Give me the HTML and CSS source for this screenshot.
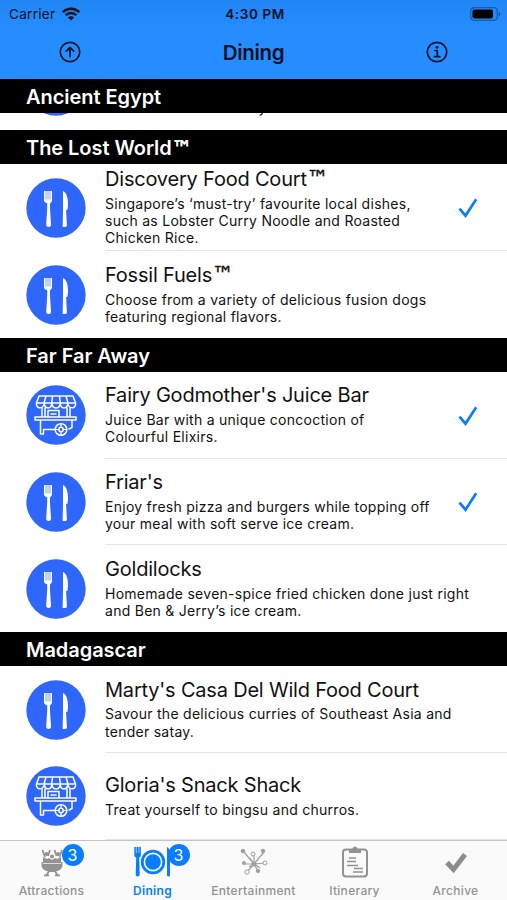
FILE: index.html
```
<!DOCTYPE html>
<html lang="en">

<head>
    <meta charset="utf-8">
    <title>Dining</title>
    <link rel="stylesheet" href="styles.css">
</head>

<body>
    <svg class="sprite" width="0" height="0">
        <symbol id="cutlery" viewBox="0 0 60 60">
            <circle cx="30" cy="30" r="29.7" fill="#2f67fd"/>
            <g fill="#fff">
                <path d="M18 13h8v9c0 1.800-.8 2.700-2 3.300v5.500l1 15.500c.1 1.700-.6 2.800-2.400 2.800s-2.500-1.100-2.400-2.800l1-15.500v-5.500c-2.400-.6-3.200-1.600-3.200-3.300z"/>
                <path d="M37 13c3.500 1.500 5 6.500 5 13 0 2.300-.2 4.200-.7 6h-1.200l.8 15.300c.1 1-.6 1.700-1.700 1.700h-2.600l.4-17z"/>
            </g>
            <path d="M20 13v8.500M22 13v8.500M24 13v8.500" stroke="#2f67fd" stroke-width=".6"/>
        </symbol>
        <symbol id="cart" viewBox="0 0 60 60">
            <circle cx="30" cy="30" r="29.7" fill="#2f67fd"/>
            <g fill="none" stroke="#fff" stroke-width="1.5" stroke-linecap="round" stroke-linejoin="round">
                <path d="M13 11h34l2.500 7h-39zM20 11l-2 7M26.500 11l-.8 7M33.500 11l.8 7M40 11l2 7"/>
                <path d="M10.500 18c-1 6.300 7 6.500 7.900 0 0 6.500 7.200 6.500 7.500 0 .2 6.500 8.200 6.500 8.300 0 .3 6.500 7.500 6.500 7.500 0 .8 6.500 8.800 6.300 7.800 0"/>
                <path d="M16 23v9M19 23v9M41 23v9M44 23v9M22 32v-6.500h11V32M25 29h5M9 32h41v3H9zM14.500 35v14h3v-4.500H29M46 35v7.500l-3 1.500"/>
                <circle cx="35" cy="44.500" r="5.800"/>
                <circle cx="35" cy="44.500" r="2.200"/>
                <path d="M35 38.700v3.600M35 46.700v3.600M29.200 44.500h3.600M37.200 44.500h3.600" stroke-width="1.2"/>
            </g>
        </symbol>
        <symbol id="check" viewBox="0 0 20 20">
            <path d="M1.500 10.700l6 7L18.200 1.300" fill="none" stroke="#087dfd" stroke-width="2.700"/>
        </symbol>
    </svg>

    <div class="header">
        <div class="status">
            <div class="carrier">
                <span>Carrier</span>
                <svg width="20" height="14" viewBox="0 0 20 14" fill="none" stroke="#04101f" stroke-width="2.5">
                    <path d="M1.700 5.100c4.700-4.600 11.900-4.600 16.600 0M4.700 8.100c3-2.900 7.600-2.900 10.600 0"/>
                    <path d="M10 13.500L6.900 10.400c1.700-1.600 4.500-1.600 6.200 0z" fill="#04101f" stroke="none"/>
                </svg>
            </div>
            <div class="clock">4:30 PM</div>
            <div class="battery">
                <svg width="31" height="14" viewBox="0 0 31 14">
                    <rect x=".7" y=".7" width="26.600" height="12.600" rx="3.500" fill="none" stroke="#155ba6" stroke-width="1.200"/>
                    <rect x="2.500" y="2.500" width="20.500" height="9" rx="2" fill="#000"/>
                    <path d="M28.700 4.700c2 .8 2 3.800 0 4.600z" fill="#155ba6"/>
                </svg>
            </div>
        </div>
        <div class="navbar">
            <svg width="22" height="22" viewBox="0 0 22 22" fill="none" stroke="#04142b" stroke-width="1.7" stroke-linecap="round" stroke-linejoin="round">
                <circle cx="11" cy="11" r="9.7"/>
                <path d="M11 15.700V6.700M7.200 10.200L11 6.400l3.800 3.800"/>
            </svg>
            <h1>Dining</h1>
            <svg width="22" height="22" viewBox="0 0 22 22" fill="none" stroke="#04142b" stroke-width="1.7" stroke-linecap="round" stroke-linejoin="round">
                <circle cx="11" cy="11" r="9.7"/>
                <path d="M9 9.500h2.300v6M8.500 15.700h5.300"/>
                <circle cx="11" cy="6.300" r="1.4" fill="#04142b" stroke="none"/>
            </svg>
        </div>
    </div>

    <div class="list">
        <h2>Ancient Egypt</h2>
        <div class="peek">
            <svg class="peek-icon" viewBox="0 57 60 3"><use href="#cutlery" width="60" height="60"/></svg>
            <svg class="peek-tail" viewBox="0 0 6 3"><path d="M4.500 0c-.6 1.800-1.400 2.300-3 2.200" fill="none" stroke="#111" stroke-width="1.2"/></svg>
        </div>

        <h2>The Lost World<span class="tm">™</span></h2>
        <div class="row">
            <svg class="icon"><use href="#cutlery"/></svg>
            <div class="info">
                <div class="text">
                    <h3>Discovery Food Court<span class="tm">™</span></h3>
                    <p>Singapore’s ‘must-try’ favourite local dishes,<br>such as Lobster Curry Noodle and Roasted<br>Chicken Rice.</p>
                </div>
                <svg class="check"><use href="#check"/></svg>
            </div>
        </div>
        <div class="row">
            <svg class="icon"><use href="#cutlery"/></svg>
            <div class="info">
                <div class="text">
                    <h3>Fossil Fuels<span class="tm">™</span></h3>
                    <p>Choose from a variety of delicious fusion dogs<br>featuring regional flavors.</p>
                </div>
            </div>
        </div>

        <h2>Far Far Away</h2>
        <div class="row">
            <svg class="icon"><use href="#cart"/></svg>
            <div class="info">
                <div class="text">
                    <h3>Fairy Godmother's Juice Bar</h3>
                    <p>Juice Bar with a unique concoction of<br>Colourful Elixirs.</p>
                </div>
                <svg class="check"><use href="#check"/></svg>
            </div>
        </div>
        <div class="row">
            <svg class="icon"><use href="#cutlery"/></svg>
            <div class="info">
                <div class="text">
                    <h3>Friar's</h3>
                    <p>Enjoy fresh pizza and burgers while topping off<br>your meal with soft serve ice cream.</p>
                </div>
                <svg class="check"><use href="#check"/></svg>
            </div>
        </div>
        <div class="row">
            <svg class="icon"><use href="#cutlery"/></svg>
            <div class="info">
                <div class="text">
                    <h3>Goldilocks</h3>
                    <p>Homemade seven-spice fried chicken done just right<br>and Ben &amp; Jerry’s ice cream.</p>
                </div>
            </div>
        </div>

        <h2>Madagascar</h2>
        <div class="row">
            <svg class="icon"><use href="#cutlery"/></svg>
            <div class="info">
                <div class="text">
                    <h3>Marty's Casa Del Wild Food Court</h3>
                    <p>Savour the delicious curries of Southeast Asia and<br>tender satay.</p>
                </div>
            </div>
        </div>
        <div class="row">
            <svg class="icon"><use href="#cart"/></svg>
            <div class="info">
                <div class="text">
                    <h3>Gloria's Snack Shack</h3>
                    <p>Treat yourself to bingsu and churros.</p>
                </div>
            </div>
        </div>
    </div>

    <div class="tabbar">
        <div class="tab">
            <div class="tab-icon">
                <svg width="24" height="30" viewBox="0 0 24 30" fill="#929292">
                    <path d="M1.500 15h21v3c0 3.500-3 6-6 6h-9c-3 0-6-2.500-6-6z"/>
                    <path d="M3 10l4 2 2-1 3 2 3-2 2 1 4-2v6H3z"/>
                    <circle cx="6.500" cy="7" r="2"/>
                    <circle cx="12" cy="9.500" r="2"/>
                    <circle cx="18" cy="7" r="2"/>
                    <path d="M2.500 3l2.500 7M10 3L8 9M14.500 3l2 6M22 3l-2.500 7M6 29l3-5h6l3 5M4 28.300h5M15 28.300h5" fill="none" stroke="#929292" stroke-width="1.8"/>
                    <path d="M3 16.500h18" stroke="#ddd" stroke-width="1"/>
                </svg>
                <span class="badge">3</span>
            </div>
            <span>Attractions</span>
        </div>
        <div class="tab active">
            <div class="tab-icon">
                <svg width="38" height="30" viewBox="0 0 38 30" fill="#087dfd">
                    <path d="M.3 0h6.600v8c0 1.500-.8 2.200-1.700 2.600l.5 17c0 2.500-4 2.500-4 0l.5-17C1 10 .3 9.500.3 8z"/>
                    <path d="M2.300 0v6M4.900 0v6" stroke="#fafafa" stroke-width=".6"/>
                    <circle cx="19" cy="15" r="10.800" fill="none" stroke="#087dfd" stroke-width="2.800"/>
                    <circle cx="19" cy="15" r="7.800"/>
                    <path d="M33 0c3 1.500 4 6 4 10 0 2.500-.4 4.500-1 6v12c0 2-3 2-3 0z"/>
                </svg>
                <span class="badge">3</span>
            </div>
            <span>Dining</span>
        </div>
        <div class="tab">
            <div class="tab-icon">
                <svg width="28" height="30" viewBox="0 0 28 30" fill="#a0a0a0" stroke="#a0a0a0">
                    <path d="M14 17L4 5M14 17L24 5M14 17V8M14 17L5 17M14 17l11-1M14 17l-7 8M14 17l4 7M10 11l4 6 5-6M9 20l5-3 6 4" fill="none" stroke-width="1.2"/>
                    <circle cx="3" cy="4" r="1.8"/>
                    <circle cx="23" cy="4" r="1.8"/>
                    <circle cx="4" cy="16" r="1.5"/>
                    <circle cx="18" cy="24" r="1.7"/>
                    <circle cx="13" cy="7" r="2" fill="#fafafa"/>
                    <circle cx="25" cy="16" r="2" fill="#fafafa"/>
                    <circle cx="7" cy="25" r="2.2" fill="#fafafa"/>
                    <circle cx="14" cy="17" r="2.5" stroke="none"/>
                </svg>
            </div>
            <span>Entertainment</span>
        </div>
        <div class="tab">
            <div class="tab-icon">
                <svg width="28" height="32" viewBox="0 0 28 32" fill="none" stroke="#929292" stroke-width="2">
                    <rect x="2" y="3.500" width="24" height="27" rx="3"/>
                    <path d="M8 7V3.500h3.500c0-4 5-4 5 0H20V7z" fill="#929292" stroke="none"/>
                    <path d="M8 12h7M6 15.500h9M6 19.500h11M13 22.500h9M12 26h10" stroke-width="1.6"/>
                </svg>
            </div>
            <span>Itinerary</span>
        </div>
        <div class="tab">
            <div class="tab-icon">
                <svg width="22" height="30" viewBox="0 0 22 30">
                    <path d="M2 15.500l6.500 7L20 7.500" fill="none" stroke="#8c8c8c" stroke-width="5"/>
                </svg>
            </div>
            <span>Archive</span>
        </div>
    </div>
</body>

</html>
```
FILE: styles.css
```
body {
    font-family: Inter, "Liberation Sans", sans-serif;
    margin: 0;
    width: 507px;
    height: 900px;
    overflow: hidden;
    background-color: white;
    color: #111;
    display: flex;
    flex-direction: column;
}

h1, h2, h3, p {
    margin: 0;
}

.sprite {
    position: absolute;
}

.header {
    height: 79px;
    flex: none;
    background: linear-gradient(#2186f5, #258dff 40%);
    color: #04101f;
}

.status {
    height: 27px;
    display: grid;
    grid-template-columns: 1fr auto 1fr;
    align-items: center;
    padding: 0 6px 0 9px;
}

.carrier {
    display: flex;
    align-items: center;
    gap: 6px;
    font-size: 13.5px;
    letter-spacing: 0.3px;
}

.clock {
    font-size: 13.5px;
    font-weight: 600;
    letter-spacing: 0.6px;
}

.battery {
    display: flex;
    justify-content: flex-end;
}

.navbar {
    height: 50px;
    display: flex;
    align-items: center;
    justify-content: space-between;
    padding: 0 59px;
}

.navbar h1 {
    font-size: 20.5px;
    font-weight: 600;
    letter-spacing: -0.3px;
    color: #04101f;
}

.list {
    flex: 1;
    min-height: 0;
    overflow: hidden;
}

.list h2 {
    height: 34.2px;
    line-height: 37px;
    padding-left: 26px;
    background-color: black;
    color: white;
    font-size: 20px;
    font-weight: 600;
    letter-spacing: -0.05px;
}

.tm {
    font-family: "DejaVu Sans", sans-serif;
    font-size: 22px;
    line-height: 1;
    -webkit-text-stroke: 0.4px currentColor;
}

h2 .tm {
    font-size: 20px;
    font-weight: 400;
    -webkit-text-stroke-width: 0.7px;
}

.peek {
    height: 17px;
    display: flex;
    padding-left: 26px;
}

.peek-icon {
    width: 60px;
    height: 3px;
}

.peek-tail {
    width: 6px;
    height: 3px;
    margin-left: 172px;
}

.row {
    height: 86.7px;
    display: flex;
    padding-left: 26px;
}

.icon {
    width: 60px;
    height: 60px;
    flex: none;
    margin: 13.5px 19px 0 0;
}

.info {
    flex: 1;
    display: flex;
    align-items: center;
    border-bottom: 1px solid #e4e4e4;
    box-sizing: border-box;
    padding-right: 29px;
}

.row:has(+ h2) .info {
    border-bottom: none;
}

.text {
    flex: 1;
    white-space: nowrap;
}

.text h3 {
    font-size: 20px;
    font-weight: 400;
    line-height: 25px;
    letter-spacing: -0.2px;
    padding-bottom: 2.6px;
}

.text p {
    font-size: 14px;
    line-height: 17.3px;
    letter-spacing: 0.27px;
    padding-bottom: 0.6px;
}

.check {
    width: 20px;
    height: 20px;
    flex: none;
    margin-top: 2px;
}

.tabbar {
    height: 60px;
    flex: none;
    box-sizing: border-box;
    border-top: 1px solid #c4c4c4;
    background-color: #fafafa;
    display: grid;
    grid-template-columns: repeat(5, 101px);
    justify-content: center;
}

.tab {
    display: flex;
    flex-direction: column;
    align-items: center;
    font-size: 12px;
    font-weight: 500;
    color: #929292;
    letter-spacing: 0.3px;
}

.tab-icon {
    position: relative;
    height: 42px;
    display: flex;
    align-items: center;
}

.active {
    color: #087dfd;
}

.active > span {
    font-weight: 600;
}

.badge {
    position: absolute;
    top: 3px;
    right: -20px;
    width: 22px;
    height: 22px;
    border-radius: 50%;
    background-color: #087dfd;
    color: white;
    font-size: 16px;
    font-weight: 400;
    line-height: 22px;
    text-align: center;
}

.active .badge {
    right: -18px;
}
```
